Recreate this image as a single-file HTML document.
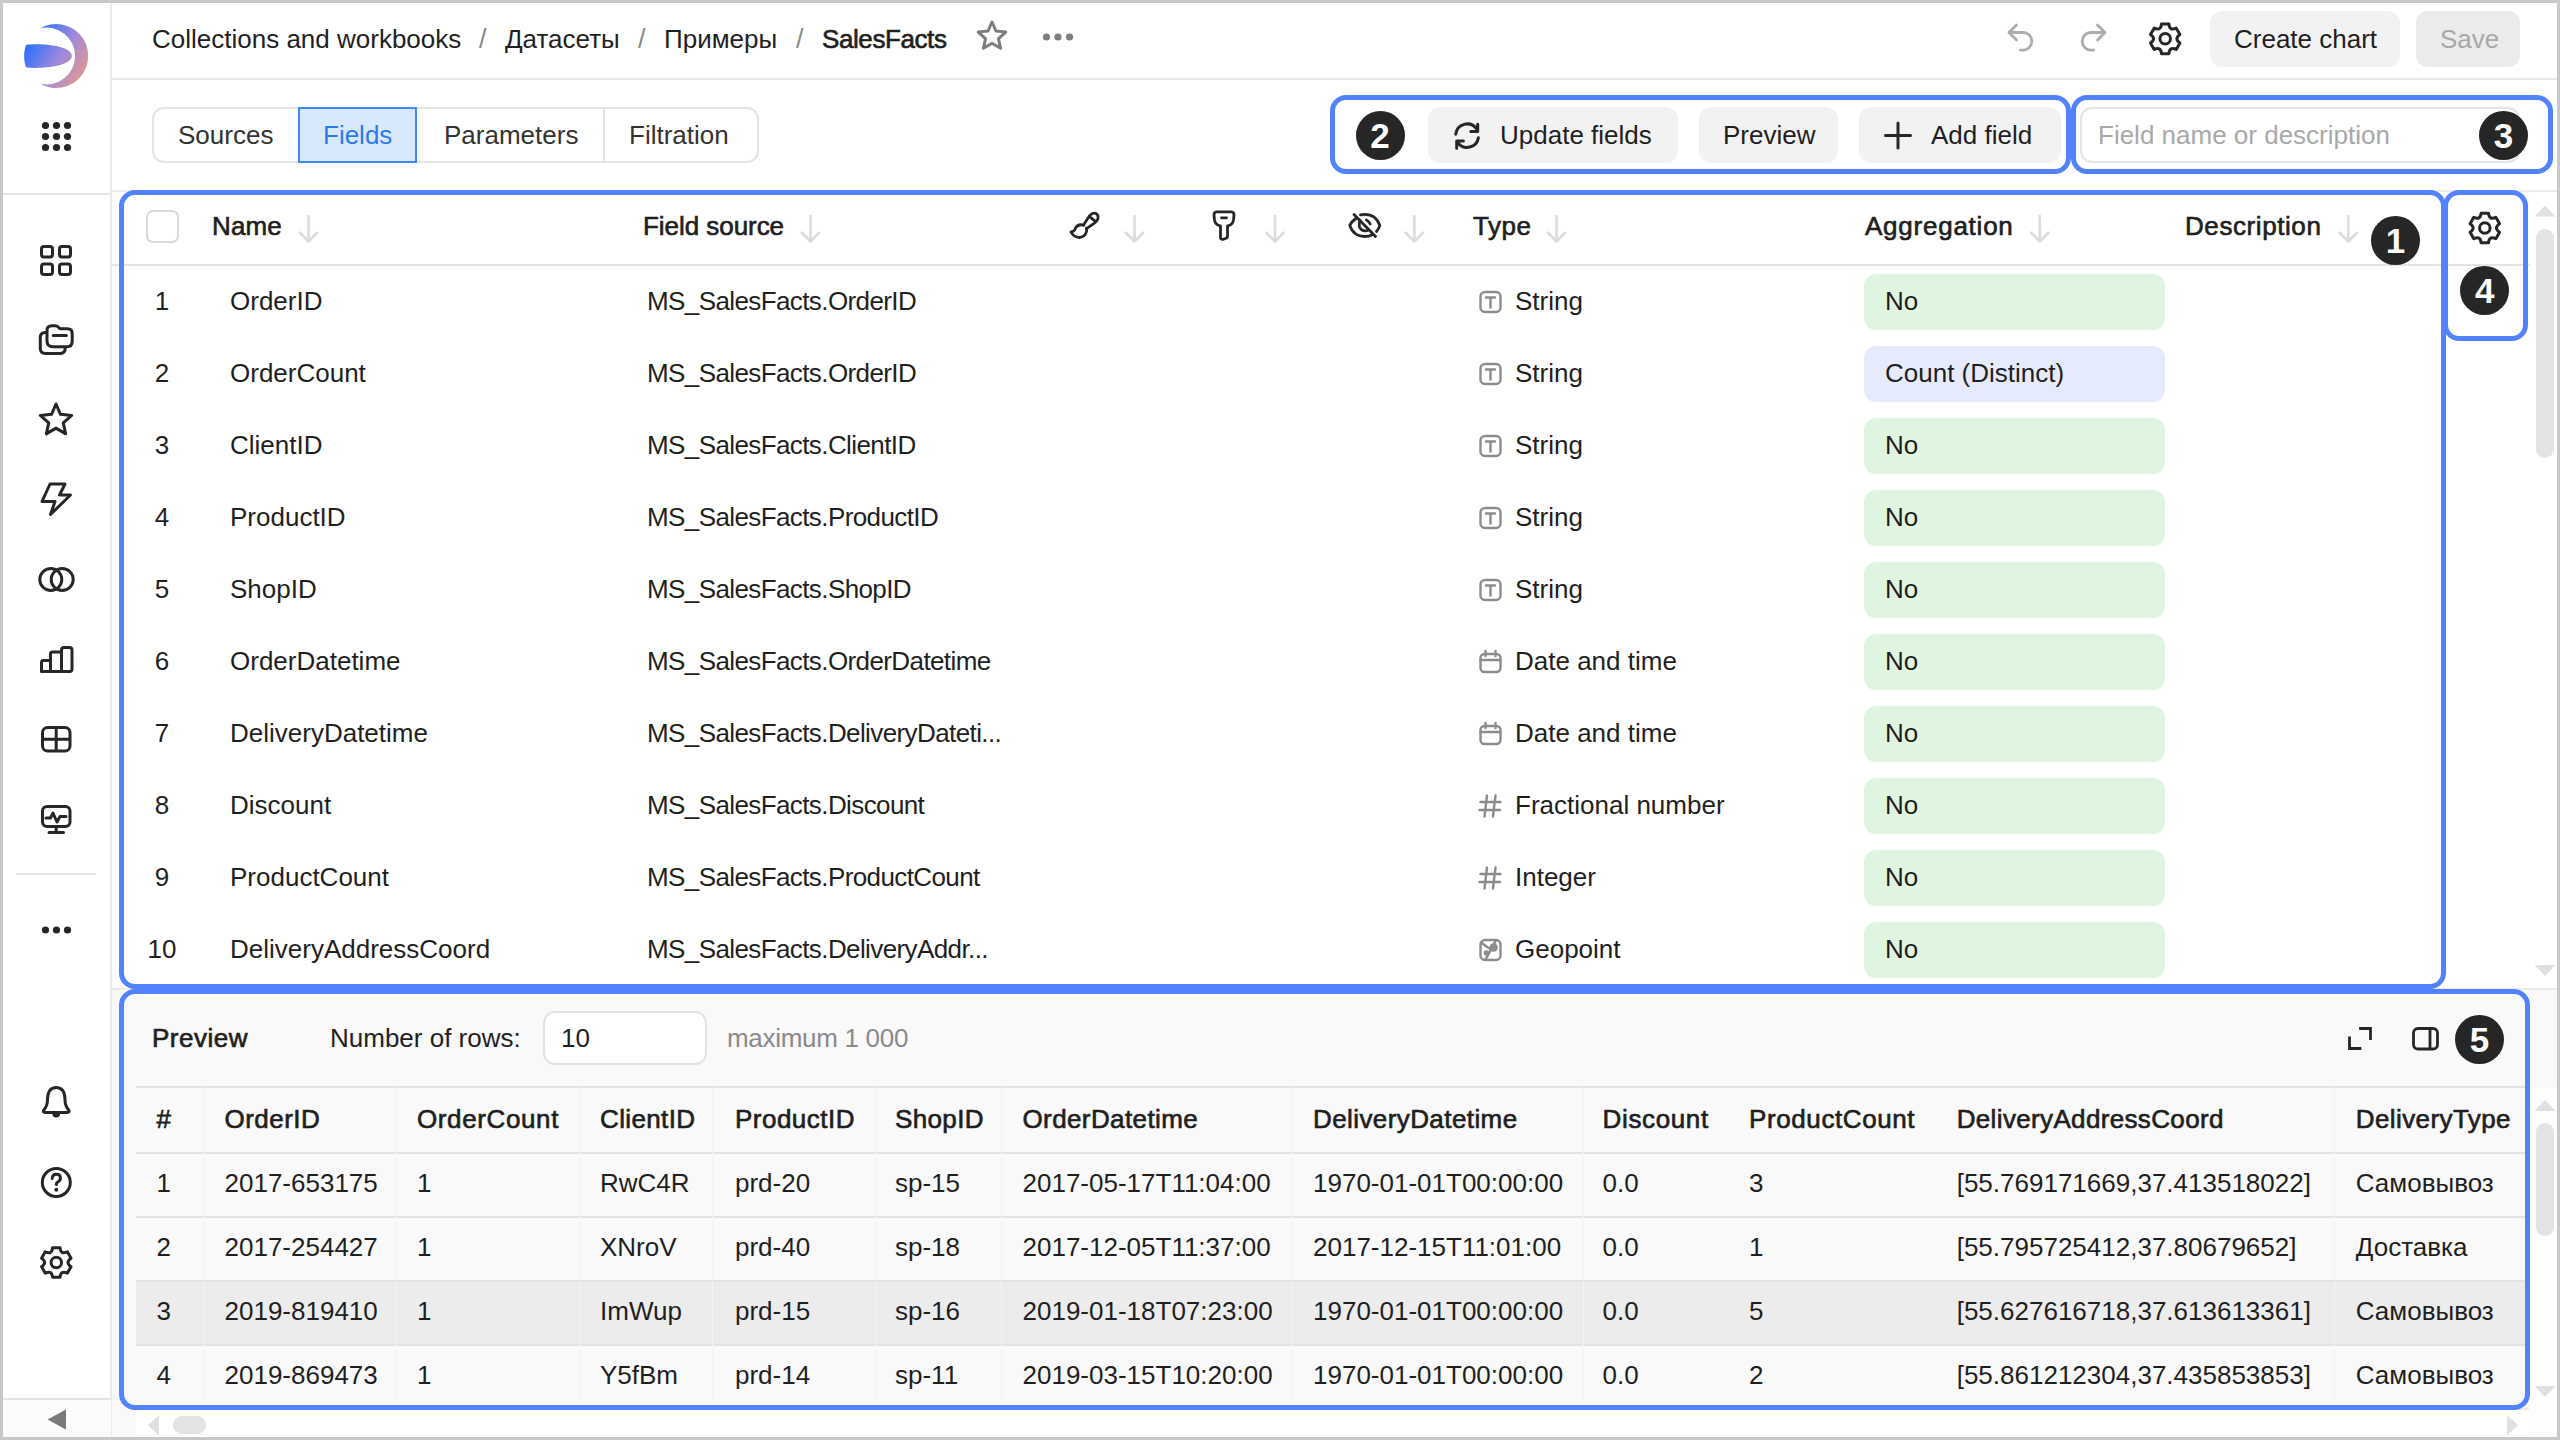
<!DOCTYPE html><html><head><meta charset="utf-8"><title>SalesFacts</title><style>
*{box-sizing:border-box;margin:0;padding:0}
html,body{width:2560px;height:1440px;overflow:hidden;background:#fff}
body{font-family:"Liberation Sans", sans-serif;font-size:26px;color:#1f1f1f;position:relative}
.a{position:absolute}
.t{position:absolute;white-space:nowrap;line-height:32px;height:32px}
.b{font-weight:bold}
svg{position:absolute;overflow:visible}
.badge{position:absolute;width:49px;height:49px;border-radius:50%;background:#262626;color:#fff;font-size:35px;line-height:49px;text-align:center;font-weight:bold}
.btn{position:absolute;background:#f2f2f2;border-radius:12px}
.pill{position:absolute;left:1864px;width:301px;height:56px;border-radius:12px;background:#e1f5df}
.ann{position:absolute;border:5px solid #5282ff;border-radius:16px}
.hl{position:absolute;height:2px;background:#e5e5e5}
.vl{position:absolute;width:2px;background:#e5e5e5}
.arr{position:absolute}
</style></head><body>
<div class="a" style="left:111px;top:989px;width:2446px;height:448px;background:#f9f9f9"></div>
<div class="a" style="left:2529px;top:1087px;width:28px;height:350px;background:#fdfdfd"></div>
<div class="a" style="left:110px;top:0;width:2px;height:1440px;background:#ebebeb"></div>
<div class="a" style="left:3px;top:193px;width:108px;height:2px;background:#e5e5e5"></div>
<div class="a" style="left:16px;top:873px;width:80px;height:2px;background:#e5e5e5"></div>
<div class="a" style="left:3px;top:1398px;width:108px;height:2px;background:#e5e5e5"></div>
<div class="a" style="left:3px;top:1400px;width:108px;height:37px;background:#fcfcfc"></div>
<div class="a" style="left:111px;top:78px;width:2446px;height:2px;background:#e8e8e8"></div>
<div class="a" style="left:111px;top:190px;width:2446px;height:2px;background:#ececec"></div>
<div class="a" style="left:111px;top:264px;width:2419px;height:2px;background:#e5e5e5"></div>
<div class="a" style="left:111px;top:988px;width:2446px;height:2px;background:#ececec"></div>
<svg class="a" style="left:0;top:0" width="112" height="1440" viewBox="0 0 112 1440"><defs><linearGradient id="lg" gradientUnits="userSpaceOnUse" x1="26" y1="38" x2="90" y2="78">
<stop offset="0" stop-color="#1c6cff"/><stop offset="0.5" stop-color="#9b88de"/><stop offset="1" stop-color="#ee9c84"/></linearGradient></defs><path d="M40,28.4 A32,32 0 1 1 40,83.6 A28.4,28.4 0 1 0 40,28.4 Z" fill="url(#lg)"/><path d="M26,45 C42,43 71,45.5 72,56 C71,66.5 42,69 26,67.5 C23.5,60 23.5,52 26,45 Z" fill="url(#lg)"/><circle cx="45.5" cy="125.5" r="3.6" fill="#262626"/><circle cx="56.5" cy="125.5" r="3.6" fill="#262626"/><circle cx="67.5" cy="125.5" r="3.6" fill="#262626"/><circle cx="45.5" cy="136.5" r="3.6" fill="#262626"/><circle cx="56.5" cy="136.5" r="3.6" fill="#262626"/><circle cx="67.5" cy="136.5" r="3.6" fill="#262626"/><circle cx="45.5" cy="147.5" r="3.6" fill="#262626"/><circle cx="56.5" cy="147.5" r="3.6" fill="#262626"/><circle cx="67.5" cy="147.5" r="3.6" fill="#262626"/><rect x="41.5" y="246.5" width="11" height="10.5" rx="2.5" fill="none" stroke="#262626" stroke-width="3" stroke-linecap="round" stroke-linejoin="round"/><rect x="59.5" y="246.5" width="11" height="10.5" rx="2.5" fill="none" stroke="#262626" stroke-width="3" stroke-linecap="round" stroke-linejoin="round"/><rect x="41.5" y="264" width="11" height="10.5" rx="2.5" fill="none" stroke="#262626" stroke-width="3" stroke-linecap="round" stroke-linejoin="round"/><rect x="59.5" y="264" width="11" height="10.5" rx="2.5" fill="none" stroke="#262626" stroke-width="3" stroke-linecap="round" stroke-linejoin="round"/><path d="M47,341 L47,330.5 Q47,325.7 52,325.7 L55,325.7 Q57,325.7 58.5,327.2 L60,328.7 L67.5,328.7 Q72.2,328.7 72.2,333.5 L72.2,341.5 Q72.2,346.7 67,346.7 L53,346.7 Q47,346.7 47,341 Z" fill="none" stroke="#262626" stroke-width="3" stroke-linecap="round" stroke-linejoin="round"/><path d="M53.3,335.6 L66.3,335.6" fill="none" stroke="#262626" stroke-width="3" stroke-linecap="round" stroke-linejoin="round"/><path d="M46.5,332.5 L45.3,332.5 Q40.3,332.5 40.3,337.5 L40.3,348.5 Q40.3,353.4 45.5,353.4 L60.5,353.4 Q65.3,353.4 65.3,347.5" fill="none" stroke="#262626" stroke-width="3" stroke-linecap="round" stroke-linejoin="round"/><path d="M56.00,404.00 L60.47,414.35 L71.69,415.40 L63.23,422.85 L65.70,433.85 L56.00,428.10 L46.30,433.85 L48.77,422.85 L40.31,415.40 L51.53,414.35 Z" fill="none" stroke="#262626" stroke-width="3" stroke-linecap="round" stroke-linejoin="round"/><path d="M50,484 L65,484 L59.5,495 L70.5,495 L50.5,514.5 L55,501.5 L42,501.5 Z" fill="none" stroke="#262626" stroke-width="3" stroke-linecap="round" stroke-linejoin="round"/><circle cx="50.8" cy="579.5" r="11" fill="none" stroke="#262626" stroke-width="3" stroke-linecap="round" stroke-linejoin="round"/><circle cx="62.2" cy="579.5" r="11" fill="none" stroke="#262626" stroke-width="3" stroke-linecap="round" stroke-linejoin="round"/><path d="M41.5,671.5 L41.5,662.5 Q41.5,660.5 43.5,660.5 L50.5,660.5 L50.5,671.5 Z" fill="none" stroke="#262626" stroke-width="3" stroke-linecap="round" stroke-linejoin="round"/><path d="M50.5,671.5 L50.5,654 Q50.5,652 52.5,652 L59.5,652 Q61.5,652 61.5,654 L61.5,671.5 Z" fill="none" stroke="#262626" stroke-width="3" stroke-linecap="round" stroke-linejoin="round"/><path d="M61.5,671.5 L61.5,650 Q61.5,647.5 64,647.5 L69.5,647.5 Q72,647.5 72,650 L72,669 Q72,671.5 69.5,671.5 L43.5,671.5 Q41.5,671.5 41.5,669.5" fill="none" stroke="#262626" stroke-width="3" stroke-linecap="round" stroke-linejoin="round"/><rect x="42.5" y="727.5" width="27.5" height="23.5" rx="5" fill="none" stroke="#262626" stroke-width="3" stroke-linecap="round" stroke-linejoin="round"/><path d="M56.2,728 L56.2,750.5 M43,739.3 L69.5,739.3" fill="none" stroke="#262626" stroke-width="3" stroke-linecap="round" stroke-linejoin="round"/><rect x="42.5" y="806.5" width="27.5" height="20" rx="4.5" fill="none" stroke="#262626" stroke-width="3" stroke-linecap="round" stroke-linejoin="round"/><path d="M46,818 L50.5,818 L53,813 L57,822 L60,816.5 L66,816.5" fill="none" stroke="#262626" stroke-width="3" stroke-linecap="round" stroke-linejoin="round"/><path d="M56.2,827 L56.2,832.5 M49,832.5 L63.5,832.5" fill="none" stroke="#262626" stroke-width="3" stroke-linecap="round" stroke-linejoin="round"/><circle cx="45.5" cy="930" r="3.6" fill="#262626"/><circle cx="56.5" cy="930" r="3.6" fill="#262626"/><circle cx="67.5" cy="930" r="3.6" fill="#262626"/><path d="M43.5,1110.5 Q47.5,1106 47.5,1100 Q47.5,1087.5 56.2,1087.5 Q65,1087.5 65,1100 Q65,1106 69,1110.5 Q69.5,1112.5 67,1112.5 L45.5,1112.5 Q43,1112.5 43.5,1110.5 Z" fill="none" stroke="#262626" stroke-width="3" stroke-linecap="round" stroke-linejoin="round"/><path d="M52.3,1113.5 A3.9,3.9 0 0 0 60.1,1113.5 Z" fill="#262626"/><circle cx="56.3" cy="1182.5" r="14" fill="none" stroke="#262626" stroke-width="3" stroke-linecap="round" stroke-linejoin="round"/><path d="M52.2,1178.5 Q52.4,1174.2 56.3,1174.2 Q60.4,1174.2 60.4,1178 Q60.4,1180.6 58,1181.8 Q56.3,1182.8 56.3,1184.6" fill="none" stroke="#262626" stroke-width="3" stroke-linecap="round" stroke-linejoin="round"/><circle cx="56.3" cy="1189.8" r="2" fill="#262626"/><path d="M52.59,1247.63 L60.01,1247.63 Q60.60,1255.04 67.33,1251.85 L71.04,1258.27 Q64.91,1262.50 71.04,1266.73 L67.33,1273.15 Q60.60,1269.96 60.01,1277.37 L52.59,1277.37 Q51.99,1269.96 45.27,1273.15 L41.56,1266.73 Q47.69,1262.50 41.56,1258.27 L45.27,1251.85 Q51.99,1255.04 52.59,1247.63 Z" fill="none" stroke="#262626" stroke-width="3.0" stroke-linejoin="round"/><circle cx="56.3" cy="1262.5" r="5.25" fill="none" stroke="#262626" stroke-width="3.0"/><path d="M47.5,1419.5 L66,1409.5 L66,1429.5 Z" fill="#7a7a7a"/></svg>
<div class="t " style="left:152px;top:23px;">Collections and workbooks</div>
<div class="t " style="left:479px;top:23px;color:#8a8a8a;font-size:27px;">/</div>
<div class="t " style="left:505px;top:23px;">Датасеты</div>
<div class="t " style="left:796px;top:23px;color:#8a8a8a;font-size:27px;">/</div>
<div class="t " style="left:664px;top:23px;">Примеры</div>
<div class="t " style="left:638px;top:23px;color:#8a8a8a;font-size:27px;">/</div>
<div class="t" style="left:822px;top:23px;letter-spacing:-0.41px;-webkit-text-stroke:0.65px #1f1f1f;">SalesFacts</div>
<svg class="a" style="left:0;top:0" width="2560" height="80" viewBox="0 0 2560 80"><path d="M992.00,22.00 L996.00,31.00 L1005.79,32.02 L998.47,38.60 L1000.52,48.23 L992.00,43.30 L983.48,48.23 L985.53,38.60 L978.21,32.02 L988.00,31.00 Z" fill="none" stroke="#7d7d7d" stroke-width="3" stroke-linecap="round" stroke-linejoin="round"/><circle cx="1046.5" cy="37" r="3.6" fill="#7d7d7d"/><circle cx="1058" cy="37" r="3.6" fill="#7d7d7d"/><circle cx="1069.5" cy="37" r="3.6" fill="#7d7d7d"/><path d="M2016.5,25 L2009,32.5 L2016.5,40 M2009,32.5 L2023,32.5 A8.8,8.8 0 0 1 2023,50.2 L2020.5,50.2" fill="none" stroke="#adadad" stroke-width="2.8" stroke-linecap="round" stroke-linejoin="round"/><path d="M2097.5,25 L2105,32.5 L2097.5,40 M2105,32.5 L2091,32.5 A8.8,8.8 0 0 0 2091,50.2 L2093.5,50.2" fill="none" stroke="#adadad" stroke-width="2.8" stroke-linecap="round" stroke-linejoin="round"/><path d="M2161.49,23.93 L2168.91,23.93 Q2169.50,31.34 2176.23,28.15 L2179.94,34.57 Q2173.81,38.80 2179.94,43.03 L2176.23,49.45 Q2169.50,46.26 2168.91,53.67 L2161.49,53.67 Q2160.89,46.26 2154.17,49.45 L2150.46,43.03 Q2156.59,38.80 2150.46,34.57 L2154.17,28.15 Q2160.89,31.34 2161.49,23.93 Z" fill="none" stroke="#262626" stroke-width="3.0" stroke-linejoin="round"/><circle cx="2165.2" cy="38.8" r="5.25" fill="none" stroke="#262626" stroke-width="3.0"/></svg>
<div class="btn" style="left:2210px;top:11px;width:190px;height:56px"></div>
<div class="t " style="left:2234px;top:23px;">Create chart</div>
<div class="btn" style="left:2416px;top:11px;width:104px;height:56px;background:#ebebeb"></div>
<div class="t " style="left:2440px;top:23px;color:#a8a8a8;">Save</div>
<div class="a" style="left:152px;top:107px;width:607px;height:56px;border:2px solid #e5e5e5;border-radius:12px"></div>
<div class="a" style="left:603px;top:109px;width:2px;height:52px;background:#e5e5e5"></div>
<div class="a" style="left:298px;top:107px;width:119px;height:56px;border:2px solid #3d8af7;background:#d9e9fd"></div>
<div class="t " style="left:178px;top:119px;color:#333;">Sources</div>
<div class="t " style="left:323px;top:119px;color:#2b7bf0;">Fields</div>
<div class="t " style="left:444px;top:119px;color:#333;">Parameters</div>
<div class="t " style="left:629px;top:119px;color:#333;">Filtration</div>
<div class="btn" style="left:1428px;top:107px;width:250px;height:56px"></div>
<div class="btn" style="left:1699px;top:107px;width:139px;height:56px"></div>
<div class="btn" style="left:1859px;top:107px;width:202px;height:56px"></div>
<div class="t " style="left:1500px;top:119px;">Update fields</div>
<div class="t " style="left:1723px;top:119px;">Preview</div>
<div class="t " style="left:1931px;top:119px;">Add field</div>
<svg class="a" style="left:0;top:0" width="2560" height="200" viewBox="0 0 2560 200"><path d="M1455.8,134.2 A11.4,11.4 0 0 1 1476.3,128.6 M1477.7,124.2 L1477.7,131.4 L1470.8,131.4" fill="none" stroke="#262626" stroke-width="3" stroke-linecap="round" stroke-linejoin="round"/><path d="M1478.4,137.8 A11.4,11.4 0 0 1 1458,142.8 M1456.7,148.2 L1456.7,140.9 L1463.4,140.9" fill="none" stroke="#262626" stroke-width="3" stroke-linecap="round" stroke-linejoin="round"/><path d="M1898,123 L1898,148 M1885.5,135.5 L1910.5,135.5" fill="none" stroke="#262626" stroke-width="3" stroke-linecap="round" stroke-linejoin="round"/></svg>
<div class="a" style="left:2080px;top:107px;width:440px;height:56px;border:2px solid #e5e5e5;border-radius:12px;background:#fff"></div>
<div class="t " style="left:2098px;top:119px;color:#a9a9a9;">Field name or description</div>
<div class="ann" style="left:1330px;top:95px;width:741px;height:79px"></div>
<div class="ann" style="left:2071px;top:95px;width:482px;height:79px"></div>
<div class="badge" style="left:1355.5px;top:110.5px">2</div>
<div class="badge" style="left:2479px;top:110.5px">3</div>
<div class="a" style="left:146px;top:210px;width:33px;height:33px;border:2px solid #dadada;border-radius:7px;background:#fff"></div>
<div class="t" style="left:212px;top:210px;letter-spacing:0.16px;-webkit-text-stroke:0.65px #1f1f1f;">Name</div>
<div class="t" style="left:643px;top:210px;letter-spacing:-0.05px;-webkit-text-stroke:0.65px #1f1f1f;">Field source</div>
<div class="t" style="left:1473px;top:210px;letter-spacing:0.51px;-webkit-text-stroke:0.65px #1f1f1f;">Type</div>
<div class="t" style="left:1865px;top:210px;letter-spacing:0.76px;-webkit-text-stroke:0.65px #1f1f1f;">Aggregation</div>
<div class="t" style="left:2185px;top:210px;letter-spacing:0.58px;-webkit-text-stroke:0.65px #1f1f1f;">Description</div>
<svg class="a" style="left:0;top:0" width="2560" height="1000" viewBox="0 0 2560 1000"><path d="M308.5,216 L308.5,241.5 M299.9,232.7 L308.5,241.5 L317.1,232.7" fill="none" stroke="#dcdcdc" stroke-width="2.7" stroke-linecap="round" stroke-linejoin="round"/><path d="M810.5,216 L810.5,241.5 M801.9,232.7 L810.5,241.5 L819.1,232.7" fill="none" stroke="#dcdcdc" stroke-width="2.7" stroke-linecap="round" stroke-linejoin="round"/><path d="M1134.5,216 L1134.5,241.5 M1125.9,232.7 L1134.5,241.5 L1143.1,232.7" fill="none" stroke="#dcdcdc" stroke-width="2.7" stroke-linecap="round" stroke-linejoin="round"/><path d="M1275,216 L1275,241.5 M1266.4,232.7 L1275,241.5 L1283.6,232.7" fill="none" stroke="#dcdcdc" stroke-width="2.7" stroke-linecap="round" stroke-linejoin="round"/><path d="M1414.4,216 L1414.4,241.5 M1405.8000000000002,232.7 L1414.4,241.5 L1423.0,232.7" fill="none" stroke="#dcdcdc" stroke-width="2.7" stroke-linecap="round" stroke-linejoin="round"/><path d="M1556.5,216 L1556.5,241.5 M1547.9,232.7 L1556.5,241.5 L1565.1,232.7" fill="none" stroke="#dcdcdc" stroke-width="2.7" stroke-linecap="round" stroke-linejoin="round"/><path d="M2039.8,216 L2039.8,241.5 M2031.2,232.7 L2039.8,241.5 L2048.4,232.7" fill="none" stroke="#dcdcdc" stroke-width="2.7" stroke-linecap="round" stroke-linejoin="round"/><path d="M2348.3,216 L2348.3,241.5 M2339.7000000000003,232.7 L2348.3,241.5 L2356.9,232.7" fill="none" stroke="#dcdcdc" stroke-width="2.7" stroke-linecap="round" stroke-linejoin="round"/><path d="M1083.5,225 L1089.5,215.8 Q1092.5,212.3 1095.5,213.3 Q1099,215 1097.8,219 Q1096.8,221.8 1093.8,223.6 L1086.5,228.6" fill="none" stroke="#262626" stroke-width="2.8" stroke-linecap="round" stroke-linejoin="round"/><path d="M1089.8,216.8 L1094.8,220.8" fill="none" stroke="#262626" stroke-width="2.8" stroke-linecap="round" stroke-linejoin="round"/><path d="M1083.8,225.2 Q1078,223.5 1075.5,228 Q1074.8,231.5 1071,232 Q1073.5,237.2 1079.5,237.5 Q1085,237 1086.5,231.5 Q1087,229.5 1086.3,228.3" fill="none" stroke="#262626" stroke-width="2.8" stroke-linecap="round" stroke-linejoin="round"/><path d="M1216.5,211.8 L1231.5,211.8 Q1234,212 1234,215 L1233.5,220 Q1232.5,225.3 1227.5,225.8 L1227.5,236.3 Q1227.5,238 1225.5,238.5 L1222.8,239.3 Q1220.5,239.6 1220.5,237.5 L1220.5,225.8 Q1215.5,225.3 1214.5,220 L1214,215 Q1214,212 1216.5,211.8 Z" fill="none" stroke="#262626" stroke-width="2.8" stroke-linecap="round" stroke-linejoin="round"/><path d="M1221.5,217.8 L1226.5,217.8" fill="none" stroke="#262626" stroke-width="2.8" stroke-linecap="round" stroke-linejoin="round"/><path d="M1360.5,214.8 Q1362.5,214.3 1364.8,214.3 Q1376,214.3 1379.8,225.4 Q1378.8,229 1376.5,231.5" fill="none" stroke="#262626" stroke-width="2.8" stroke-linecap="round" stroke-linejoin="round"/><path d="M1356.5,218 Q1351.5,221.5 1349.8,225.4 Q1353.5,236.5 1364.8,236.5 Q1369,236.5 1372,235" fill="none" stroke="#262626" stroke-width="2.8" stroke-linecap="round" stroke-linejoin="round"/><path d="M1360,220.5 Q1358.8,223 1359.3,226.5 Q1361,231 1366,230.8 L1367.5,230.5" fill="none" stroke="#262626" stroke-width="2.8" stroke-linecap="round" stroke-linejoin="round"/><path d="M1366.3,220 Q1369,221.2 1370.2,224" fill="none" stroke="#262626" stroke-width="2.8" stroke-linecap="round" stroke-linejoin="round"/><path d="M1354,214.5 L1375.5,236.5" fill="none" stroke="#262626" stroke-width="2.8" stroke-linecap="round" stroke-linejoin="round"/><path d="M2481.09,213.13 L2488.51,213.13 Q2489.11,220.54 2495.83,217.35 L2499.54,223.77 Q2493.41,228.00 2499.54,232.23 L2495.83,238.65 Q2489.11,235.46 2488.51,242.87 L2481.09,242.87 Q2480.50,235.46 2473.77,238.65 L2470.06,232.23 Q2476.19,228.00 2470.06,223.77 L2473.77,217.35 Q2480.50,220.54 2481.09,213.13 Z" fill="none" stroke="#262626" stroke-width="3.0" stroke-linejoin="round"/><circle cx="2484.8" cy="228" r="5.25" fill="none" stroke="#262626" stroke-width="3.0"/><rect x="1480.5" y="292" width="20" height="20" rx="4.5" fill="none" stroke="#8c8c8c" stroke-width="2.4" stroke-linecap="round" stroke-linejoin="round"/><path d="M1486.0,297.5 L1495.0,297.5 M1490.5,297.5 L1490.5,307.5" fill="none" stroke="#8c8c8c" stroke-width="2.4" stroke-linecap="round" stroke-linejoin="round"/><rect x="1480.5" y="364" width="20" height="20" rx="4.5" fill="none" stroke="#8c8c8c" stroke-width="2.4" stroke-linecap="round" stroke-linejoin="round"/><path d="M1486.0,369.5 L1495.0,369.5 M1490.5,369.5 L1490.5,379.5" fill="none" stroke="#8c8c8c" stroke-width="2.4" stroke-linecap="round" stroke-linejoin="round"/><rect x="1480.5" y="436" width="20" height="20" rx="4.5" fill="none" stroke="#8c8c8c" stroke-width="2.4" stroke-linecap="round" stroke-linejoin="round"/><path d="M1486.0,441.5 L1495.0,441.5 M1490.5,441.5 L1490.5,451.5" fill="none" stroke="#8c8c8c" stroke-width="2.4" stroke-linecap="round" stroke-linejoin="round"/><rect x="1480.5" y="508" width="20" height="20" rx="4.5" fill="none" stroke="#8c8c8c" stroke-width="2.4" stroke-linecap="round" stroke-linejoin="round"/><path d="M1486.0,513.5 L1495.0,513.5 M1490.5,513.5 L1490.5,523.5" fill="none" stroke="#8c8c8c" stroke-width="2.4" stroke-linecap="round" stroke-linejoin="round"/><rect x="1480.5" y="580" width="20" height="20" rx="4.5" fill="none" stroke="#8c8c8c" stroke-width="2.4" stroke-linecap="round" stroke-linejoin="round"/><path d="M1486.0,585.5 L1495.0,585.5 M1490.5,585.5 L1490.5,595.5" fill="none" stroke="#8c8c8c" stroke-width="2.4" stroke-linecap="round" stroke-linejoin="round"/><rect x="1480.5" y="654" width="20" height="18" rx="4" fill="none" stroke="#8c8c8c" stroke-width="2.4" stroke-linecap="round" stroke-linejoin="round"/><path d="M1480.5,660 L1500.5,660 M1485.5,651 L1485.5,656 M1495.5,651 L1495.5,656" fill="none" stroke="#8c8c8c" stroke-width="2.4" stroke-linecap="round" stroke-linejoin="round"/><rect x="1480.5" y="726" width="20" height="18" rx="4" fill="none" stroke="#8c8c8c" stroke-width="2.4" stroke-linecap="round" stroke-linejoin="round"/><path d="M1480.5,732 L1500.5,732 M1485.5,723 L1485.5,728 M1495.5,723 L1495.5,728" fill="none" stroke="#8c8c8c" stroke-width="2.4" stroke-linecap="round" stroke-linejoin="round"/><path d="M1487.0,795.5 L1484.5,816.5 M1495.5,795.5 L1493.0,816.5 M1480.5,802 L1500.5,802 M1479.5,810 L1500.0,810" fill="none" stroke="#8c8c8c" stroke-width="2.4" stroke-linecap="round" stroke-linejoin="round"/><path d="M1487.0,867.5 L1484.5,888.5 M1495.5,867.5 L1493.0,888.5 M1480.5,874 L1500.5,874 M1479.5,882 L1500.0,882" fill="none" stroke="#8c8c8c" stroke-width="2.4" stroke-linecap="round" stroke-linejoin="round"/><rect x="1480.5" y="940" width="20" height="20" rx="4.5" fill="none" stroke="#8c8c8c" stroke-width="2.4" stroke-linecap="round" stroke-linejoin="round"/><path d="M1481.7,943 L1489.4,948.4 M1495.8,940.6 L1485.6,959.4" fill="none" stroke="#8c8c8c" stroke-width="2.4" stroke-linecap="round" stroke-linejoin="round"/><circle cx="1493.6" cy="947.5" r="4.3" fill="#8c8c8c"/><circle cx="1486.4" cy="953" r="2.7" fill="#8c8c8c"/><path d="M2534.5,216.5 L2545,205.5 L2555.5,216.5 Z" fill="#e0e0e0"/><path d="M2534.5,965 L2545,976 L2555.5,965 Z" fill="#e0e0e0"/></svg>
<div class="a" style="left:2536px;top:229px;width:18px;height:229px;border-radius:9px;background:#e3e3e3"></div>
<div class="t" style="left:132px;top:285px;width:60px;text-align:center">1</div>
<div class="t " style="left:230px;top:285px;">OrderID</div>
<div class="t " style="left:647px;top:285px;letter-spacing:-0.6px;">MS_SalesFacts.OrderID</div>
<div class="t " style="left:1515px;top:285px;">String</div>
<div class="pill" style="top:273.5px;background:#e0f5df"></div>
<div class="t " style="left:1885px;top:285px;">No</div>
<div class="t" style="left:132px;top:357px;width:60px;text-align:center">2</div>
<div class="t " style="left:230px;top:357px;">OrderCount</div>
<div class="t " style="left:647px;top:357px;letter-spacing:-0.6px;">MS_SalesFacts.OrderID</div>
<div class="t " style="left:1515px;top:357px;">String</div>
<div class="pill" style="top:345.5px;background:#e5ebfc"></div>
<div class="t " style="left:1885px;top:357px;">Count (Distinct)</div>
<div class="t" style="left:132px;top:429px;width:60px;text-align:center">3</div>
<div class="t " style="left:230px;top:429px;">ClientID</div>
<div class="t " style="left:647px;top:429px;letter-spacing:-0.6px;">MS_SalesFacts.ClientID</div>
<div class="t " style="left:1515px;top:429px;">String</div>
<div class="pill" style="top:417.5px;background:#e0f5df"></div>
<div class="t " style="left:1885px;top:429px;">No</div>
<div class="t" style="left:132px;top:501px;width:60px;text-align:center">4</div>
<div class="t " style="left:230px;top:501px;">ProductID</div>
<div class="t " style="left:647px;top:501px;letter-spacing:-0.6px;">MS_SalesFacts.ProductID</div>
<div class="t " style="left:1515px;top:501px;">String</div>
<div class="pill" style="top:489.5px;background:#e0f5df"></div>
<div class="t " style="left:1885px;top:501px;">No</div>
<div class="t" style="left:132px;top:573px;width:60px;text-align:center">5</div>
<div class="t " style="left:230px;top:573px;">ShopID</div>
<div class="t " style="left:647px;top:573px;letter-spacing:-0.6px;">MS_SalesFacts.ShopID</div>
<div class="t " style="left:1515px;top:573px;">String</div>
<div class="pill" style="top:561.5px;background:#e0f5df"></div>
<div class="t " style="left:1885px;top:573px;">No</div>
<div class="t" style="left:132px;top:645px;width:60px;text-align:center">6</div>
<div class="t " style="left:230px;top:645px;">OrderDatetime</div>
<div class="t " style="left:647px;top:645px;letter-spacing:-0.6px;">MS_SalesFacts.OrderDatetime</div>
<div class="t " style="left:1515px;top:645px;">Date and time</div>
<div class="pill" style="top:633.5px;background:#e0f5df"></div>
<div class="t " style="left:1885px;top:645px;">No</div>
<div class="t" style="left:132px;top:717px;width:60px;text-align:center">7</div>
<div class="t " style="left:230px;top:717px;">DeliveryDatetime</div>
<div class="t " style="left:647px;top:717px;letter-spacing:-0.6px;">MS_SalesFacts.DeliveryDateti...</div>
<div class="t " style="left:1515px;top:717px;">Date and time</div>
<div class="pill" style="top:705.5px;background:#e0f5df"></div>
<div class="t " style="left:1885px;top:717px;">No</div>
<div class="t" style="left:132px;top:789px;width:60px;text-align:center">8</div>
<div class="t " style="left:230px;top:789px;">Discount</div>
<div class="t " style="left:647px;top:789px;letter-spacing:-0.6px;">MS_SalesFacts.Discount</div>
<div class="t " style="left:1515px;top:789px;">Fractional number</div>
<div class="pill" style="top:777.5px;background:#e0f5df"></div>
<div class="t " style="left:1885px;top:789px;">No</div>
<div class="t" style="left:132px;top:861px;width:60px;text-align:center">9</div>
<div class="t " style="left:230px;top:861px;">ProductCount</div>
<div class="t " style="left:647px;top:861px;letter-spacing:-0.6px;">MS_SalesFacts.ProductCount</div>
<div class="t " style="left:1515px;top:861px;">Integer</div>
<div class="pill" style="top:849.5px;background:#e0f5df"></div>
<div class="t " style="left:1885px;top:861px;">No</div>
<div class="t" style="left:132px;top:933px;width:60px;text-align:center">10</div>
<div class="t " style="left:230px;top:933px;">DeliveryAddressCoord</div>
<div class="t " style="left:647px;top:933px;letter-spacing:-0.6px;">MS_SalesFacts.DeliveryAddr...</div>
<div class="t " style="left:1515px;top:933px;">Geopoint</div>
<div class="pill" style="top:921.5px;background:#e0f5df"></div>
<div class="t " style="left:1885px;top:933px;">No</div>
<div class="ann" style="left:119px;top:190px;width:2327px;height:798.5px"></div>
<div class="ann" style="left:2443px;top:190px;width:85px;height:150.5px"></div>
<div class="badge" style="left:2371px;top:216px">1</div>
<div class="badge" style="left:2460.3px;top:265.7px">4</div>
<div class="a" style="left:136px;top:1410px;width:2393px;height:27px;background:#fff"></div>
<div class="a" style="left:136px;top:1280.5px;width:2393px;height:64px;background:#ececec"></div>
<div class="a" style="left:136px;top:1086px;width:2393px;height:2px;background:#e3e3e3"></div>
<div class="a" style="left:136px;top:1152px;width:2393px;height:2px;background:#e3e3e3"></div>
<div class="a" style="left:136px;top:1215.5px;width:2393px;height:2px;background:#e3e3e3"></div>
<div class="a" style="left:136px;top:1279.5px;width:2393px;height:2px;background:#e3e3e3"></div>
<div class="a" style="left:136px;top:1343.5px;width:2393px;height:2px;background:#e3e3e3"></div>
<div class="a" style="left:136px;top:1408px;width:2393px;height:2px;background:#ececec"></div>
<div class="a" style="left:203px;top:1087px;width:1px;height:322px;background:#f3f3f3"></div>
<div class="a" style="left:395px;top:1087px;width:1px;height:322px;background:#f3f3f3"></div>
<div class="a" style="left:579px;top:1087px;width:1px;height:322px;background:#f3f3f3"></div>
<div class="a" style="left:712px;top:1087px;width:1px;height:322px;background:#f3f3f3"></div>
<div class="a" style="left:875px;top:1087px;width:1px;height:322px;background:#f3f3f3"></div>
<div class="a" style="left:1001px;top:1087px;width:1px;height:322px;background:#f3f3f3"></div>
<div class="a" style="left:1292px;top:1087px;width:1px;height:322px;background:#f3f3f3"></div>
<div class="a" style="left:1583px;top:1087px;width:1px;height:322px;background:#f3f3f3"></div>
<div class="a" style="left:2334px;top:1087px;width:1px;height:322px;background:#f3f3f3"></div>
<div class="t" style="left:152px;top:1022px;letter-spacing:0.50px;-webkit-text-stroke:0.65px #1f1f1f;">Preview</div>
<div class="t " style="left:330px;top:1022px;">Number of rows:</div>
<div class="a" style="left:543px;top:1011px;width:164px;height:54px;border:2px solid #e2e2e2;border-radius:12px;background:#fff"></div>
<div class="t " style="left:561px;top:1022px;">10</div>
<div class="t " style="left:727px;top:1022px;color:#8a8a8a;letter-spacing:-0.3px;">maximum 1 000</div>
<div class="t" style="left:156.5px;top:1103px;letter-spacing:0.00px;-webkit-text-stroke:0.65px #1f1f1f;">#</div>
<div class="t" style="left:224.5px;top:1103px;letter-spacing:0.47px;-webkit-text-stroke:0.65px #1f1f1f;">OrderID</div>
<div class="t" style="left:417px;top:1103px;letter-spacing:0.62px;-webkit-text-stroke:0.65px #1f1f1f;">OrderCount</div>
<div class="t" style="left:600px;top:1103px;letter-spacing:0.36px;-webkit-text-stroke:0.65px #1f1f1f;">ClientID</div>
<div class="t" style="left:735px;top:1103px;letter-spacing:0.48px;-webkit-text-stroke:0.65px #1f1f1f;">ProductID</div>
<div class="t" style="left:895px;top:1103px;letter-spacing:0.36px;-webkit-text-stroke:0.65px #1f1f1f;">ShopID</div>
<div class="t" style="left:1022.5px;top:1103px;letter-spacing:0.39px;-webkit-text-stroke:0.65px #1f1f1f;">OrderDatetime</div>
<div class="t" style="left:1313px;top:1103px;letter-spacing:0.41px;-webkit-text-stroke:0.65px #1f1f1f;">DeliveryDatetime</div>
<div class="t" style="left:1602.6px;top:1103px;letter-spacing:0.63px;-webkit-text-stroke:0.65px #1f1f1f;">Discount</div>
<div class="t" style="left:1749px;top:1103px;letter-spacing:0.60px;-webkit-text-stroke:0.65px #1f1f1f;">ProductCount</div>
<div class="t" style="left:1956.7px;top:1103px;letter-spacing:0.35px;-webkit-text-stroke:0.65px #1f1f1f;">DeliveryAddressCoord</div>
<div class="t" style="left:2355.8px;top:1103px;letter-spacing:0.40px;-webkit-text-stroke:0.65px #1f1f1f;">DeliveryType</div>
<div class="t " style="left:156.5px;top:1166.5px;">1</div>
<div class="t " style="left:224.5px;top:1166.5px;">2017-653175</div>
<div class="t " style="left:417px;top:1166.5px;">1</div>
<div class="t " style="left:600px;top:1166.5px;">RwC4R</div>
<div class="t " style="left:735px;top:1166.5px;">prd-20</div>
<div class="t " style="left:895px;top:1166.5px;">sp-15</div>
<div class="t " style="left:1022.5px;top:1166.5px;">2017-05-17T11:04:00</div>
<div class="t " style="left:1313px;top:1166.5px;">1970-01-01T00:00:00</div>
<div class="t " style="left:1602.6px;top:1166.5px;">0.0</div>
<div class="t " style="left:1749px;top:1166.5px;">3</div>
<div class="t " style="left:1956.7px;top:1166.5px;">[55.769171669,37.413518022]</div>
<div class="t " style="left:2355.8px;top:1166.5px;">Самовывоз</div>
<div class="t " style="left:156.5px;top:1230.5px;">2</div>
<div class="t " style="left:224.5px;top:1230.5px;">2017-254427</div>
<div class="t " style="left:417px;top:1230.5px;">1</div>
<div class="t " style="left:600px;top:1230.5px;">XNroV</div>
<div class="t " style="left:735px;top:1230.5px;">prd-40</div>
<div class="t " style="left:895px;top:1230.5px;">sp-18</div>
<div class="t " style="left:1022.5px;top:1230.5px;">2017-12-05T11:37:00</div>
<div class="t " style="left:1313px;top:1230.5px;">2017-12-15T11:01:00</div>
<div class="t " style="left:1602.6px;top:1230.5px;">0.0</div>
<div class="t " style="left:1749px;top:1230.5px;">1</div>
<div class="t " style="left:1956.7px;top:1230.5px;">[55.795725412,37.80679652]</div>
<div class="t " style="left:2355.8px;top:1230.5px;">Доставка</div>
<div class="t " style="left:156.5px;top:1294.5px;">3</div>
<div class="t " style="left:224.5px;top:1294.5px;">2019-819410</div>
<div class="t " style="left:417px;top:1294.5px;">1</div>
<div class="t " style="left:600px;top:1294.5px;">ImWup</div>
<div class="t " style="left:735px;top:1294.5px;">prd-15</div>
<div class="t " style="left:895px;top:1294.5px;">sp-16</div>
<div class="t " style="left:1022.5px;top:1294.5px;">2019-01-18T07:23:00</div>
<div class="t " style="left:1313px;top:1294.5px;">1970-01-01T00:00:00</div>
<div class="t " style="left:1602.6px;top:1294.5px;">0.0</div>
<div class="t " style="left:1749px;top:1294.5px;">5</div>
<div class="t " style="left:1956.7px;top:1294.5px;">[55.627616718,37.613613361]</div>
<div class="t " style="left:2355.8px;top:1294.5px;">Самовывоз</div>
<div class="t " style="left:156.5px;top:1358.5px;">4</div>
<div class="t " style="left:224.5px;top:1358.5px;">2019-869473</div>
<div class="t " style="left:417px;top:1358.5px;">1</div>
<div class="t " style="left:600px;top:1358.5px;">Y5fBm</div>
<div class="t " style="left:735px;top:1358.5px;">prd-14</div>
<div class="t " style="left:895px;top:1358.5px;">sp-11</div>
<div class="t " style="left:1022.5px;top:1358.5px;">2019-03-15T10:20:00</div>
<div class="t " style="left:1313px;top:1358.5px;">1970-01-01T00:00:00</div>
<div class="t " style="left:1602.6px;top:1358.5px;">0.0</div>
<div class="t " style="left:1749px;top:1358.5px;">2</div>
<div class="t " style="left:1956.7px;top:1358.5px;">[55.861212304,37.435853853]</div>
<div class="t " style="left:2355.8px;top:1358.5px;">Самовывоз</div>
<svg class="a" style="left:0;top:0" width="2560" height="1440" viewBox="0 0 2560 1440"><path d="M2349.5,1038 L2349.5,1048.5 L2360,1048.5 M2360.5,1028.5 L2370.5,1028.5 L2370.5,1038.5" fill="none" stroke="#262626" stroke-width="2.8" stroke-linecap="square"/><rect x="2413.5" y="1028.5" width="24" height="20.5" rx="4.5" fill="none" stroke="#262626" stroke-width="2.8" stroke-linecap="round" stroke-linejoin="round"/><path d="M2430,1029 L2430,1048.5" fill="none" stroke="#262626" stroke-width="2.8" stroke-linecap="round" stroke-linejoin="round"/><path d="M2534.5,1111 L2545,1100 L2555.5,1111 Z" fill="#e0e0e0"/><path d="M2534.5,1386 L2545,1397 L2555.5,1386 Z" fill="#e0e0e0"/><path d="M159,1415 L148,1425.3 L159,1435.5 Z" fill="#e0e0e0"/><path d="M2507,1415 L2518,1425.3 L2507,1435.5 Z" fill="#e0e0e0"/></svg>
<div class="a" style="left:2536px;top:1123px;width:18px;height:113px;border-radius:9px;background:#e3e3e3"></div>
<div class="a" style="left:173px;top:1416px;width:33px;height:18px;border-radius:9px;background:#e3e3e3"></div>
<div class="ann" style="left:119px;top:989px;width:2411px;height:421px"></div>
<div class="badge" style="left:2455px;top:1014.8px">5</div>
<div class="a" style="left:0;top:0;width:2560px;height:3px;background:#c8c8c8"></div>
<div class="a" style="left:0;top:1437px;width:2560px;height:3px;background:#c8c8c8"></div>
<div class="a" style="left:0;top:0;width:3px;height:1440px;background:#c8c8c8"></div>
<div class="a" style="left:2557px;top:0;width:3px;height:1440px;background:#c8c8c8"></div>
</body></html>
